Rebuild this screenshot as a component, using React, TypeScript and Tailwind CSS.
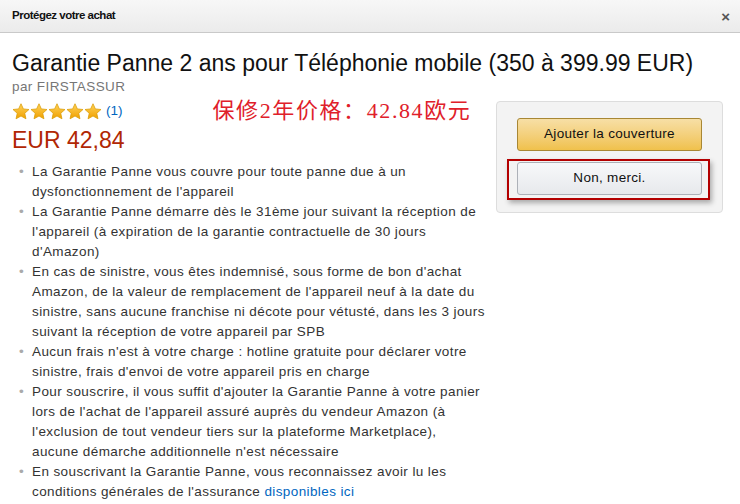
import React from 'react';

const bullets: React.ReactNode[][] = [
  ["La Garantie Panne vous couvre pour toute panne due à un", "dysfonctionnement de l'appareil"],
  [
    "La Garantie Panne démarre dès le 31ème jour suivant la réception de",
    "l'appareil (à expiration de la garantie contractuelle de 30 jours",
    "d'Amazon)",
  ],
  [
    "En cas de sinistre, vous êtes indemnisé, sous forme de bon d'achat",
    "Amazon, de la valeur de remplacement de l'appareil neuf à la date du",
    "sinistre, sans aucune franchise ni décote pour vétusté, dans les 3 jours",
    "suivant la réception de votre appareil par SPB",
  ],
  [
    "Aucun frais n'est à votre charge : hotline gratuite pour déclarer votre",
    "sinistre, frais d'envoi de votre appareil pris en charge",
  ],
  [
    "Pour souscrire, il vous suffit d'ajouter la Garantie Panne à votre panier",
    "lors de l'achat de l'appareil assuré auprès du vendeur Amazon (à",
    "l'exclusion de tout vendeur tiers sur la plateforme Marketplace),",
    "aucune démarche additionnelle n'est nécessaire",
  ],
  [
    "En souscrivant la Garantie Panne, vous reconnaissez avoir lu les",
    <>
      conditions générales de l'assurance{' '}
      <a href="#" className="text-[#0066c0]">disponibles ici</a>
    </>,
  ],
];

const Star = () => (
  <svg width="18" height="17" viewBox="0 0 24 23">
    <defs>
      <linearGradient id="sg" x1="0" y1="0" x2="0" y2="1">
        <stop offset="0" stopColor="#ffd35a" />
        <stop offset="1" stopColor="#f0a000" />
      </linearGradient>
    </defs>
    <path
      d="M12 1l3.2 7 7.6.8-5.7 5.1 1.6 7.5L12 17.6 5.3 21.4l1.6-7.5L1.2 8.8l7.6-.8z"
      fill="url(#sg)"
      stroke="#d99a00"
      strokeWidth="1"
      strokeLinejoin="round"
    />
  </svg>
);

export default function App() {
  return (
    <div className="w-[740px] h-[504px] overflow-hidden bg-white font-['Liberation_Sans',Arial,sans-serif] text-[#333]">
      <div className="h-[33px] flex items-center justify-between pl-[12px] pr-[10px] bg-gradient-to-b from-[#f7f7f7] to-[#ebebeb] border-b border-[#c9c9c9]">
        <span className="text-[11.5px] tracking-[-0.5px] font-bold text-[#111]">Protégez votre achat</span>
        <span className="text-[15px] font-bold text-[#555] leading-none">×</span>
      </div>

      <div className="pl-[12px] pr-[12px] pt-[16px]">
        <h1 className="text-[23px] leading-[28px] text-[#111]">
          Garantie Panne 2 ans pour Téléphonie mobile (350 à 399.99 EUR)
        </h1>
        <div className="text-[13.5px] tracking-[0.4px] leading-[16px] text-[#767676] mt-[2px]">par FIRSTASSUR</div>

        <div className="flex gap-[14px]">
          <div className="w-[470px] shrink-0">
            <div className="flex items-center h-[20px] mt-[6px]">
              <div className="flex">
                <Star /><Star /><Star /><Star /><Star />
              </div>
              <a href="#" className="text-[13.5px] text-[#0066c0] ml-[4px]">(1)</a>
              <span className="ml-[90px] text-[22px] leading-[22px] tracking-[1.6px] text-[#e0202a] font-['Liberation_Serif','Noto_Sans_CJK_SC',serif]">
                保修2年价格：42.84欧元
              </span>
            </div>
            <div className="text-[23px] leading-[26px] text-[#b12704] mt-[6px]">EUR 42,84</div>

            <ul className="mt-[9px] text-[13.5px] tracking-[0.4px] leading-[20px]">
              {bullets.map((lines, i) => (
                <li key={i} className="flex">
                  <span className="w-[20px] shrink-0 pl-[7px] text-[#aaa]">•</span>
                  <div>
                    {lines.map((l, j) => (
                      <div key={j} className="whitespace-nowrap">{l}</div>
                    ))}
                  </div>
                </li>
              ))}
            </ul>
          </div>

          <div className="mt-[6px]">
            <div className="w-[227px] h-[112px] bg-[#f3f3f3] border border-[#ddd] rounded-[4px] pt-[16px] px-[20px]">
              <button className="w-full h-[33px] rounded-[3px] border border-[#a88734] bg-gradient-to-b from-[#f7dfa5] to-[#f0c14b] text-[13.5px] tracking-[0.3px] text-[#111]">
                Ajouter la couverture
              </button>
              <div className="-ml-[10px] -mr-[8px] mt-[8px] border-2 border-[#b30000] pl-[8px] pr-[6px] pt-[1px] pb-[3px] shadow-[2px_3px_5px_rgba(0,0,0,0.3)]">
                <button className="w-full h-[33px] rounded-[3px] border border-[#adb1b8] bg-gradient-to-b from-[#f7f8fa] to-[#e7e9ec] text-[13.5px] tracking-[0.3px] text-[#111]">
                  Non, merci.
                </button>
              </div>
            </div>
          </div>
        </div>
      </div>
    </div>
  );
}
